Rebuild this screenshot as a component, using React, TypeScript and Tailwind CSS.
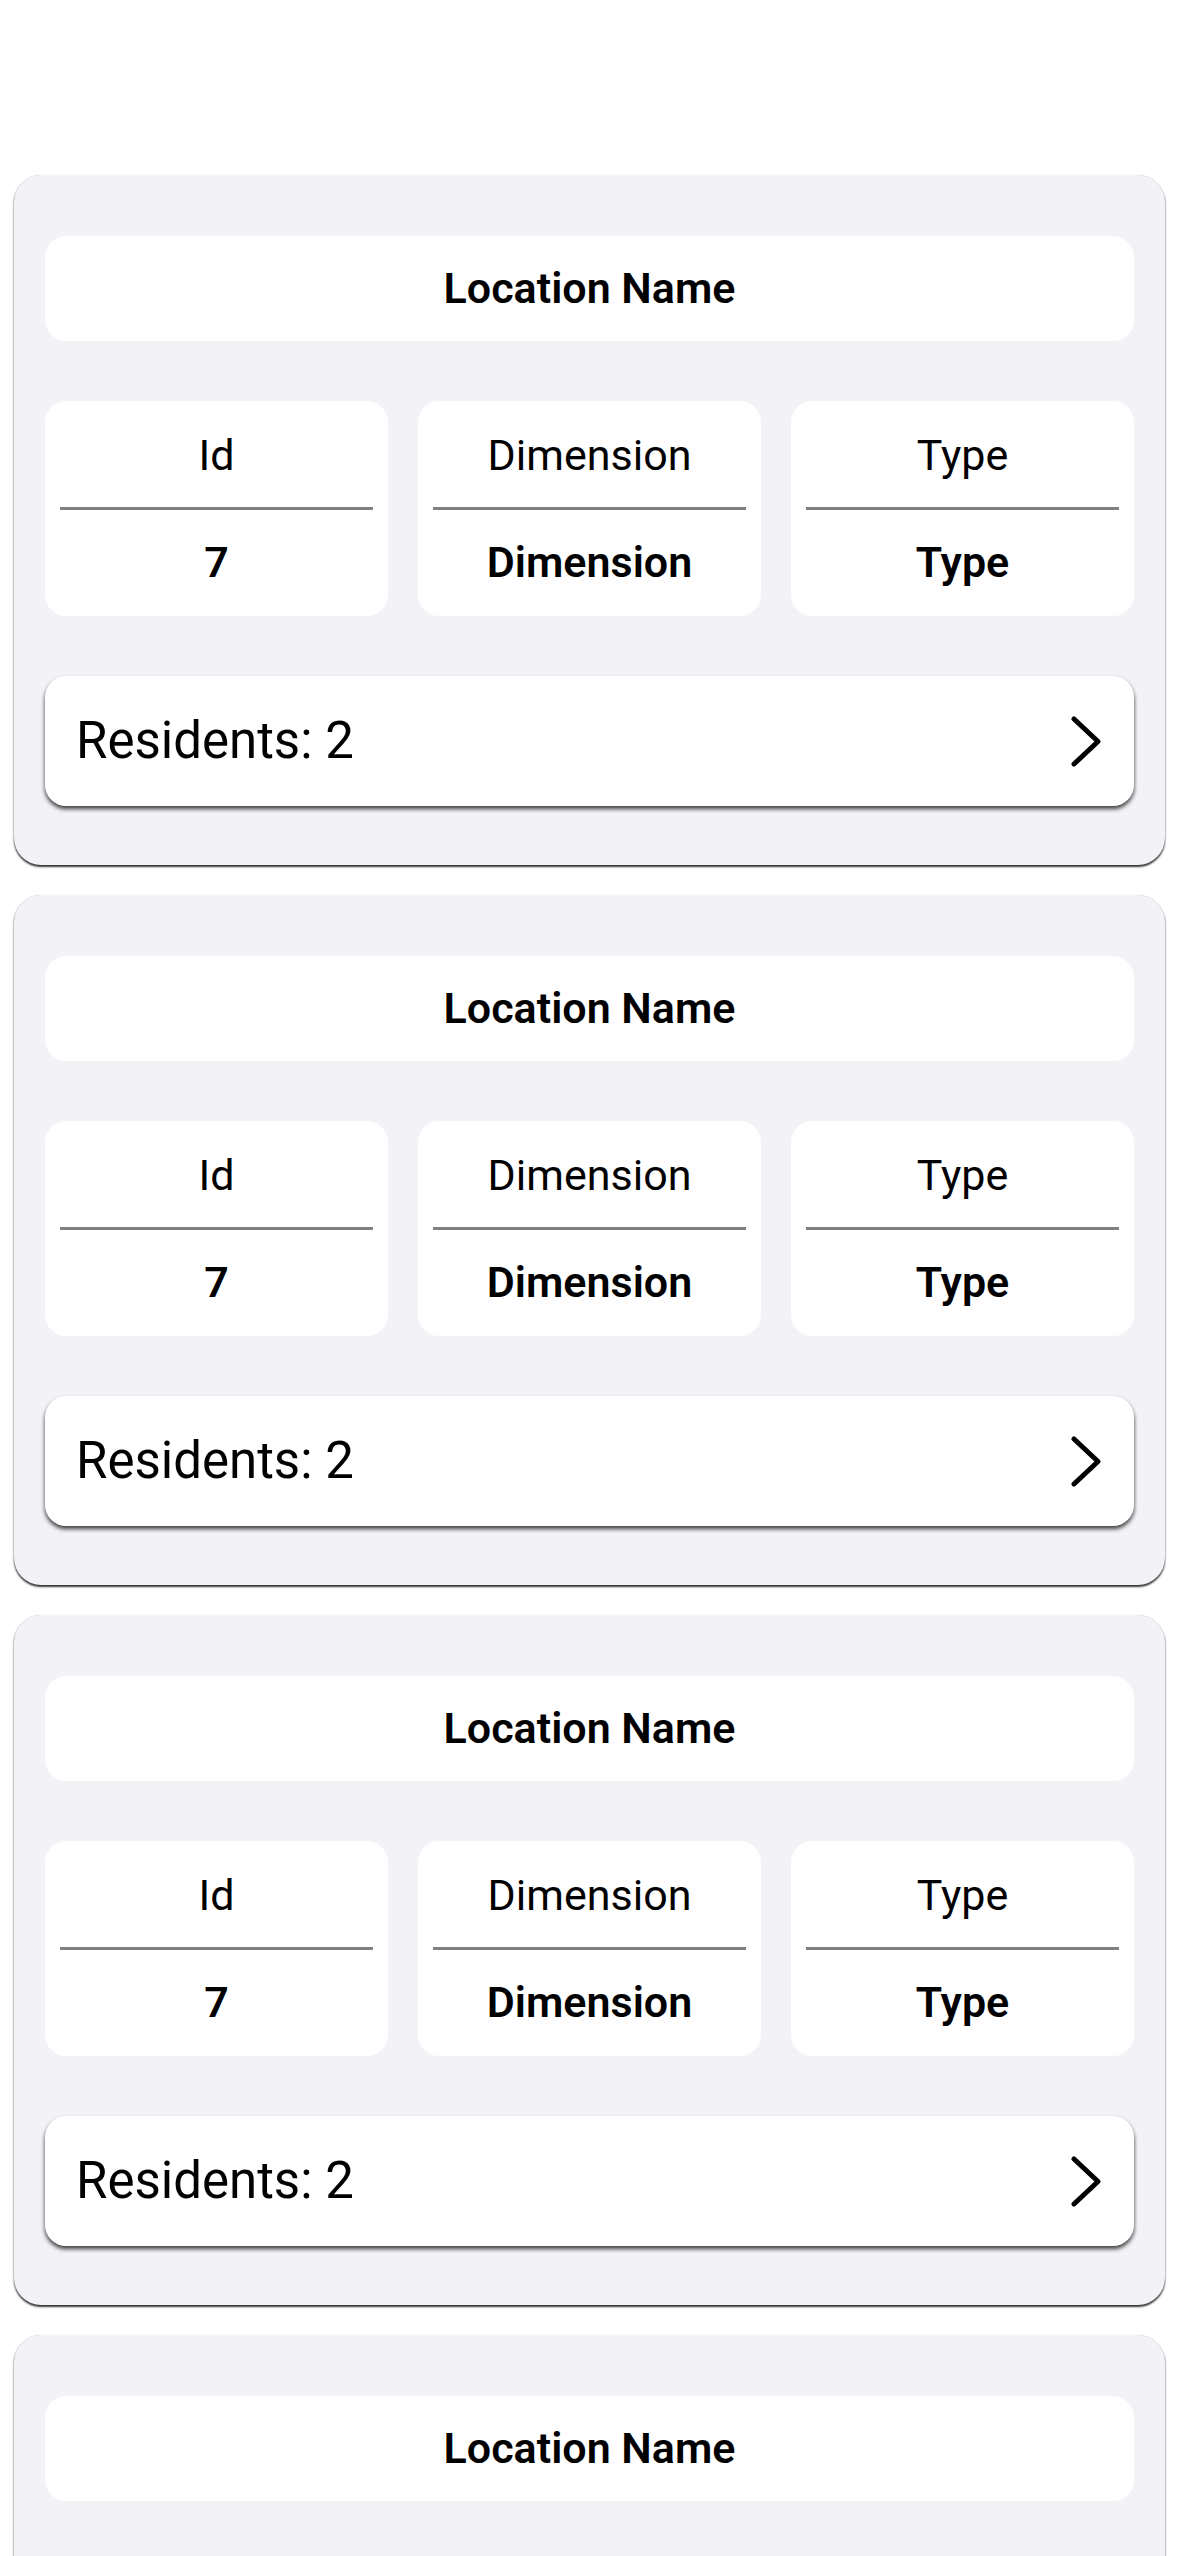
const locations = [1, 2, 3, 4].map((n) => ({
  key: n,
  name: "Location Name",
  id: 7,
  dimension: "Dimension",
  type: "Type",
  residents: 2,
}));

function InfoBox({ label, value }: { label: string; value: string | number }) {
  return (
    <div className="flex flex-col rounded-[21px] bg-white px-[15px] pt-[28px] pb-[28px]">
      <div className="h-[52px] text-center text-[43px] leading-[52px] text-black">{label}</div>
      <div className="mt-[26px] h-[3px] bg-[#808080]" />
      <div className="mt-[26px] h-[52px] text-center text-[43px] font-semibold leading-[52px] text-black">{value}</div>
    </div>
  );
}

function Chevron() {
  return (
    <svg width="30" height="51" viewBox="0 0 30 51" fill="none">
      <path d="M3 3 L27 25.5 L3 48" stroke="black" strokeWidth="5" strokeLinecap="round" strokeLinejoin="round" />
    </svg>
  );
}

function LocationCard({ loc }: { loc: (typeof locations)[number] }) {
  return (
    <div className="flex flex-col gap-[60px] rounded-[27px] bg-[#f2f2f7] px-[31px] pt-[61px] pb-[59px] shadow-[0_0_1px_rgba(0,0,0,0.25),0_2px_2px_rgba(0,0,0,0.8)]">
      <div className="flex h-[105px] items-center justify-center rounded-[21px] bg-white">
        <span className="text-[43px] font-semibold text-black">{loc.name}</span>
      </div>
      <div className="grid grid-cols-3 gap-[30px]">
        <InfoBox label="Id" value={loc.id} />
        <InfoBox label="Dimension" value={loc.dimension} />
        <InfoBox label="Type" value={loc.type} />
      </div>
      <button className="flex h-[130px] items-center justify-between rounded-[21px] bg-white pl-[31px] pr-[33px] shadow-[0_3px_4px_rgba(0,0,0,0.75)]">
        <span className="text-[51px] text-black">Residents: {loc.residents}</span>
        <Chevron />
      </button>
    </div>
  );
}

export default function App() {
  return (
    <div className="min-h-screen bg-white font-[Roboto,sans-serif]">
      <div className="flex flex-col gap-[30px] px-[14px] pt-[175px]">
        {locations.map((loc) => (
          <LocationCard key={loc.key} loc={loc} />
        ))}
      </div>
    </div>
  );
}
